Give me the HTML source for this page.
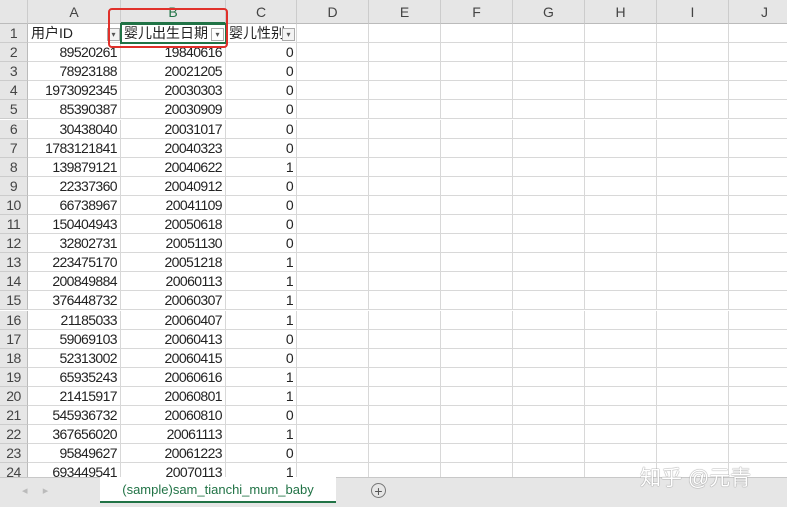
<!DOCTYPE html><html><head><meta charset="utf-8"><style>
body{margin:0;width:787px;height:507px;overflow:hidden;background:#fff;font-family:"Liberation Sans","Noto Sans CJK SC",sans-serif;position:relative}
.a{position:absolute;box-sizing:border-box}
.hd{background:#e6e6e6;color:#444;font-size:14px;text-align:center;line-height:24px;top:0;height:24px;border-right:1px solid #ccc;border-bottom:1px solid #bbb}
.rh{background:#e6e6e6;color:#444;font-size:14px;left:0;width:28px;text-align:center;border-bottom:1px solid #ccc;border-right:1px solid #bbb;letter-spacing:-0.5px}
.c{font-size:14px;color:#222;text-align:right;padding-right:3px;border-right:1px solid #d8d8d8;border-bottom:1px solid #d8d8d8;white-space:nowrap;overflow:hidden;letter-spacing:-0.6px}
.dd{width:13px;height:13px;border:1px solid #aaa;background:#f3f3f3;font-size:8px;line-height:12px;text-align:center;color:#555}
</style></head><body>
<div id="grid"></div>
<script>
var cols=[[28,121,'A'],[121,226,'B'],[226,297,'C'],[297,369,'D'],[369,441,'E'],[441,513,'F'],[513,585,'G'],[585,657,'H'],[657,729,'I'],[729,801,'J']];
var d=[["89520261","19840616",0],["78923188","20021205",0],["1973092345","20030303",0],["85390387","20030909",0],["30438040","20031017",0],["1783121841","20040323",0],["139879121","20040622",1],["22337360","20040912",0],["66738967","20041109",0],["150404943","20050618",0],["32802731","20051130",0],["223475170","20051218",1],["200849884","20060113",1],["376448732","20060307",1],["21185033","20060407",1],["59069103","20060413",0],["52313002","20060415",0],["65935243","20060616",1],["21415917","20060801",1],["545936732","20060810",0],["367656020","20061113",1],["95849627","20061223",0],["693449541","20070113",1]];
var h='<div class="a hd" style="left:0;width:28px"></div>';
cols.forEach(function(c){h+='<div class="a hd" style="left:'+c[0]+'px;width:'+(c[1]-c[0])+'px;'+(c[2]=='B'?'border-bottom:2px solid #217346;color:#217346':'')+'">'+c[2]+'</div>';});
var RH=19.1;
for(var r=1;r<=24;r++){var t=24+(r-1)*RH;
h+='<div class="a rh" style="top:'+t+'px;height:'+RH+'px;line-height:'+RH+'px">'+r+'</div>';
cols.forEach(function(c,i){var w=c[1]-c[0],txt='',st='';
if(r==1){if(i==0)txt='用户ID';if(i==1)txt='婴儿出生日期';if(i==2)txt='婴儿性别';st='text-align:left;padding-left:3px;letter-spacing:0;';}
else if(i<3)txt=d[r-2][i];
h+='<div class="a c" style="left:'+c[0]+'px;top:'+t+'px;width:'+w+'px;height:'+RH+'px;line-height:'+RH+'px;'+st+'">'+txt+'</div>';});}
h+='<div class="a dd" style="left:107px;top:28px">▾</div><div class="a dd" style="left:211px;top:28px;background:#fff">▾</div><div class="a dd" style="left:282px;top:28px">▾</div>';
h+='<div class="a" style="left:120px;top:23px;width:107px;height:21px;border:2px solid #217346"></div>';
h+='<div class="a" style="left:108px;top:8px;width:120px;height:40px;border:2px solid #e0302a;border-radius:4px"></div>';
document.getElementById('grid').innerHTML=h;
</script>
<div class="a" style="left:0;top:477px;width:787px;height:30px;background:#e6e6e6;border-top:1px solid #c8c8c8"></div>
<div class="a" style="left:22px;top:484px;color:#bbb;font-size:11px">◂&nbsp;&nbsp;&nbsp;&nbsp;&nbsp;▸</div>
<div class="a" style="left:100px;top:477px;width:236px;height:26px;background:#fff;border-bottom:2px solid #217346;color:#217346;font-size:13px;text-align:center;line-height:26px">(sample)sam_tianchi_mum_baby</div>
<div class="a" style="left:371px;top:483px;width:15px;height:15px;border:1px solid #777;border-radius:50%;text-align:center;line-height:14px;font-size:14px;color:#555">+</div>
<div class="a" style="left:640px;top:462px;font-size:21px;color:#fff;text-shadow:0 0 1px #888,0 0 1px #888">知乎 @元青</div>
</body></html>
